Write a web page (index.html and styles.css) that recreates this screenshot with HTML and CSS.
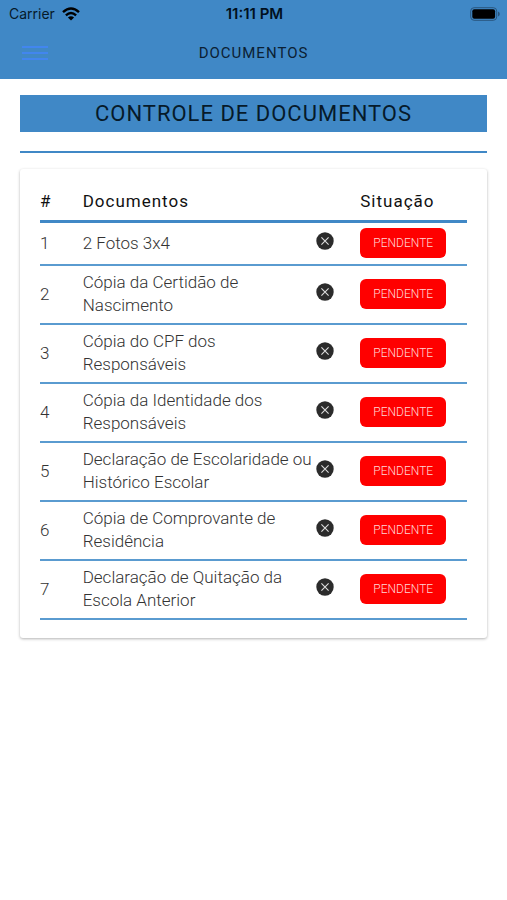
FILE: index.html
```html
<!DOCTYPE html>
<html lang="pt-BR">
<head>
<meta charset="utf-8">
<meta name="viewport" content="width=device-width, initial-scale=1">
<title>Documentos</title>
<link rel="stylesheet" href="styles.css">
</head>
<body>
<svg class="defs" aria-hidden="true">
  <symbol id="close" viewBox="0 0 18 18">
    <circle cx="9" cy="9" r="8.7" fill="#2b2b2b"/>
    <path d="M5.4 5.4l7.2 7.2M12.6 5.4l-7.2 7.2" stroke="#ddd" stroke-width="1.1" fill="none"/>
  </symbol>
</svg>
<header class="top">
  <div class="status">
    <span class="carrier">Carrier
      <svg class="wifi" viewBox="0 0 18 14" aria-hidden="true">
        <path d="M1 5.2Q9-2.2 17 5.2M3.9 8.3Q9 3.6 14.1 8.3" fill="none" stroke="#000" stroke-width="2.4"/>
        <path d="M9 13.6L5.9 10.5Q9 7.9 12.1 10.5Z"/>
      </svg>
    </span>
    <span class="clock">11:11 PM</span>
    <svg class="battery" viewBox="0 0 30 14" aria-hidden="true">
      <rect x=".7" y=".7" width="26" height="12.6" rx="3.4" fill="none" stroke="#29567e"/>
      <rect x="2.3" y="2.3" width="22.8" height="9.4" rx="2"/>
      <path d="M28 4.6q1.8.6 1.8 2.4T28 9.4z" fill="#29567e"/>
    </svg>
  </div>
  <div class="bar">
    <button class="menu" type="button" aria-label="Menu"><span></span><span></span><span></span></button>
    <div class="title">DOCUMENTOS</div>
  </div>
</header>
<main>
  <h1>CONTROLE DE DOCUMENTOS</h1>
  <hr>
  <section class="card">
    <table>
      <colgroup><col class="num"><col><col class="mark"><col class="state"></colgroup>
      <thead>
        <tr><th>#</th><th colspan="2">Documentos</th><th>Situação</th></tr>
      </thead>
      <tbody>
        <tr><td>1</td><td>2 Fotos 3x4</td><td><svg class="icon"><use href="#close"/></svg></td><td><span class="badge">PENDENTE</span></td></tr>
        <tr><td>2</td><td>Cópia da Certidão de Nascimento</td><td><svg class="icon"><use href="#close"/></svg></td><td><span class="badge">PENDENTE</span></td></tr>
        <tr><td>3</td><td>Cópia do CPF dos Responsáveis</td><td><svg class="icon"><use href="#close"/></svg></td><td><span class="badge">PENDENTE</span></td></tr>
        <tr><td>4</td><td>Cópia da Identidade dos Responsáveis</td><td><svg class="icon"><use href="#close"/></svg></td><td><span class="badge">PENDENTE</span></td></tr>
        <tr><td>5</td><td>Declaração de Escolaridade ou Histórico Escolar</td><td><svg class="icon"><use href="#close"/></svg></td><td><span class="badge">PENDENTE</span></td></tr>
        <tr><td>6</td><td>Cópia de Comprovante de Residência</td><td><svg class="icon"><use href="#close"/></svg></td><td><span class="badge">PENDENTE</span></td></tr>
        <tr><td>7</td><td>Declaração de Quitação da Escola Anterior</td><td><svg class="icon"><use href="#close"/></svg></td><td><span class="badge">PENDENTE</span></td></tr>
      </tbody>
    </table>
  </section>
</main>
</body>
</html>
```
FILE: styles.css
```css
* { box-sizing: border-box; }

body {
  margin: 0;
  background: #fff;
  color: #111;
  font-family: Roboto, "Liberation Sans", sans-serif;
}

.defs { display: none; }

.top { background: #4088c6; }

.status {
  display: grid;
  grid-template-columns: 1fr auto 1fr;
  align-items: center;
  height: 27px;
  padding: 0 7px 0 9px;
  color: #061a2a;
  font: 14px/20px Inter, sans-serif;
}

.carrier {
  display: flex;
  align-items: center;
  gap: 7px;
}

.wifi { width: 18px; height: 14px; }

.clock { color: #001020; font-size: 15px; font-weight: 600; }

.battery {
  width: 30px;
  height: 14px;
  justify-self: end;
}

.bar {
  display: grid;
  grid-template-columns: 1fr auto 1fr;
  align-items: center;
  height: 52px;
  padding: 0 22px;
}

.menu {
  display: grid;
  gap: 4px;
  width: 26px;
  padding: 0;
  border: 0;
  background: none;
}

.menu span { height: 2px; background: #4286ef; }

.title {
  color: #0b2033;
  font-size: 15px;
  line-height: 20px;
  letter-spacing: 1px;
}

main { padding: 16px 20px; }

h1 {
  margin: 0;
  padding: 5px 0 4px;
  background: #4088c6;
  color: #061a2a;
  font-size: 22px;
  font-weight: 400;
  line-height: 28px;
  letter-spacing: 1px;
  text-align: center;
}

hr {
  height: 2px;
  margin: 19px 0 16px;
  border: 0;
  background: #4088c6;
}

.card {
  padding: 12px 20px 18px;
  border-radius: 3px;
  box-shadow: 0 1px 3px rgba(0, 0, 0, 0.3);
}

table {
  width: 100%;
  border-spacing: 0;
  table-layout: fixed;
}

th, td {
  padding: 5px 0 6px;
  border-bottom: 2px solid #5a9bd0;
  text-align: left;
}

th {
  padding: 9px 0 7px;
  border-bottom: 3px solid #4088c6;
  font-size: 17px;
  font-weight: 400;
  line-height: 23px;
  letter-spacing: 1px;
}

td {
  color: #333;
  font-size: 17px;
  font-weight: 300;
  line-height: 23px;
}

.num { width: 10%; }
.mark { width: 44px; }
.state { width: 25%; }

.icon { display: block; width: 18px; height: 18px; margin-bottom: 4px; }

.badge {
  display: block;
  width: 86px;
  border-radius: 6px;
  background: #f00;
  color: #ffd8d8;
  font-size: 12px;
  line-height: 30px;
  text-align: center;
}
```
